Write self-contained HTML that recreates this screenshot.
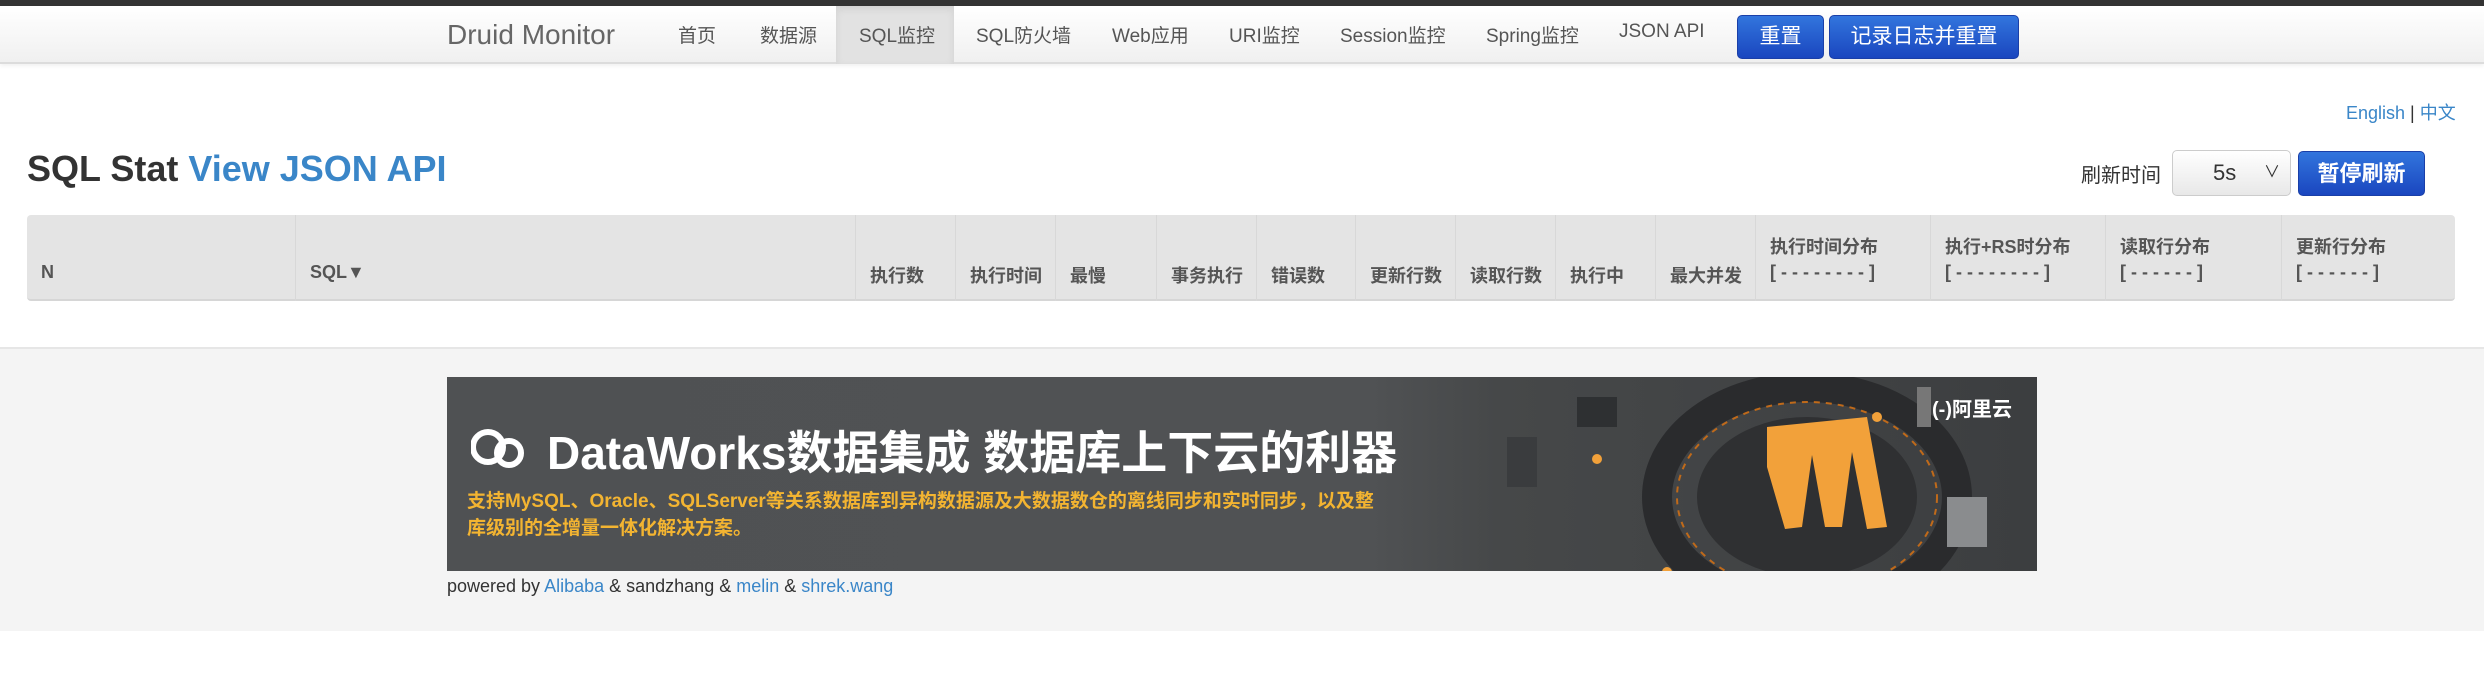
<!DOCTYPE html>
<html><head><meta charset="utf-8"><style>
*{margin:0;padding:0;box-sizing:border-box}
body{width:2484px;height:699px;background:#fff;font-family:"Liberation Sans","Noto Sans CJK SC",sans-serif;position:relative;overflow:hidden;color:#333}
.abs{position:absolute;white-space:nowrap}
.top{left:0;top:0;width:2484px;height:6px;background:#333}
.nav{left:0;top:6px;width:2484px;height:58px;background:linear-gradient(#fff,#f0f0f0);border-bottom:2px solid #dcdcdc;box-shadow:0 2px 4px rgba(0,0,0,.06)}
.brand{left:447px;top:19px;font-size:28px;color:#666}
.ni{top:21px;font-size:19px;color:#555}
.active{left:836px;top:6px;width:118px;height:58px;background:#e2e2e2;box-shadow:inset 0 3px 8px rgba(0,0,0,.08)}
.btn{background:linear-gradient(#3275dd,#1a46bf);border:1px solid #1a3fa8;border-radius:5px;color:#fff;font-size:21px;text-align:center}
.th{top:215px;height:86px;border-left:1px solid #d8d8d8;font-weight:bold;font-size:18px;color:#555}
.th span{position:absolute;left:14px}
.foot{left:0;top:347px;width:2484px;height:284px;background:#f4f4f4;border-top:2px solid #e6e6e6}
a{color:#3a86c8;text-decoration:none}
</style></head><body>
<div class="abs top"></div>
<div class="abs nav"></div>
<div class="abs active"></div>
<div class="abs brand">Druid Monitor</div>
<div class="abs ni" style="left:678px">首页</div>
<div class="abs ni" style="left:760px">数据源</div>
<div class="abs ni" style="left:859px">SQL监控</div>
<div class="abs ni" style="left:976px">SQL防火墙</div>
<div class="abs ni" style="left:1112px">Web应用</div>
<div class="abs ni" style="left:1229px">URI监控</div>
<div class="abs ni" style="left:1340px">Session监控</div>
<div class="abs ni" style="left:1486px">Spring监控</div>
<div class="abs ni" style="left:1619px">JSON API</div>
<div class="abs btn" style="left:1737px;top:15px;width:87px;height:44px;line-height:42px">重置</div>
<div class="abs btn" style="left:1829px;top:15px;width:190px;height:44px;line-height:42px">记录日志并重置</div>

<div class="abs" style="left:2346px;top:99px;font-size:18px;color:#333"><a>English</a> | <a>中文</a></div>
<div class="abs" style="left:27px;top:148px;font-size:36px;font-weight:bold;color:#333">SQL Stat <a style="color:#3a86c8">View JSON API</a></div>
<div class="abs" style="left:2081px;top:159px;font-size:20px;color:#333">刷新时间</div>
<div class="abs" style="left:2172px;top:150px;width:119px;height:46px;border:1px solid #ccc;border-radius:5px;background:linear-gradient(#fff,#e8e8e8);font-size:22px;line-height:44px;padding-left:40px">5s<span style="position:absolute;right:10px;top:0;font-size:16px">∨</span></div>
<div class="abs btn" style="left:2298px;top:151px;width:127px;height:45px;line-height:43px;font-weight:bold;font-size:22px">暂停刷新</div>

<div class="abs" style="left:27px;top:215px;width:2428px;height:86px;background:#e4e4e4;border-radius:4px;border-bottom:2px solid #d6d6d6"></div>
<div class="abs th" style="left:27px;width:268px;border-left:none"><span style="top:47px">N</span></div>
<div class="abs th" style="left:295px;width:560px"><span style="top:47px">SQL▼</span></div>
<div class="abs th" style="left:855px;width:100px"><span style="top:47px">执行数</span></div>
<div class="abs th" style="left:955px;width:100px"><span style="top:47px">执行时间</span></div>
<div class="abs th" style="left:1055px;width:101px"><span style="top:47px">最慢</span></div>
<div class="abs th" style="left:1156px;width:100px"><span style="top:47px">事务执行</span></div>
<div class="abs th" style="left:1256px;width:99px"><span style="top:47px">错误数</span></div>
<div class="abs th" style="left:1355px;width:100px"><span style="top:47px">更新行数</span></div>
<div class="abs th" style="left:1455px;width:100px"><span style="top:47px">读取行数</span></div>
<div class="abs th" style="left:1555px;width:100px"><span style="top:47px">执行中</span></div>
<div class="abs th" style="left:1655px;width:100px"><span style="top:47px">最大并发</span></div>
<div class="abs th" style="left:1755px;width:175px"><span style="top:18px">执行时间分布</span><span style="top:47px">[ - - - - - - - - ]</span></div>
<div class="abs th" style="left:1930px;width:175px"><span style="top:18px">执行+RS时分布</span><span style="top:47px">[ - - - - - - - - ]</span></div>
<div class="abs th" style="left:2105px;width:176px"><span style="top:18px">读取行分布</span><span style="top:47px">[ - - - - - - ]</span></div>
<div class="abs th" style="left:2281px;width:174px"><span style="top:18px">更新行分布</span><span style="top:47px">[ - - - - - - ]</span></div>

<div class="abs foot"></div>
<div class="abs" style="left:447px;top:377px;width:1590px;height:194px;background:linear-gradient(90deg,#4f5153 0%,#505254 58%,#464849 66%,#3c3e40 100%);overflow:hidden">
 <svg style="position:absolute;left:1000px;top:0" width="590" height="194">
  <ellipse cx="360" cy="120" rx="150" ry="110" fill="none" stroke="#2a2b2d" stroke-width="30"/>
  <ellipse cx="360" cy="120" rx="110" ry="80" fill="#2f3032"/>
  <ellipse cx="360" cy="120" rx="130" ry="95" fill="none" stroke="#c06a1a" stroke-width="2" stroke-dasharray="6 6"/>
  <path d="M320 50 L420 40 L440 150 L420 152 L405 75 L395 150 L378 150 L365 78 L355 150 L338 152 L320 90 Z" fill="#f2a13a"/>
  <rect x="60" y="60" width="30" height="50" fill="#3a3c3e"/><rect x="130" y="20" width="40" height="30" fill="#2e3032"/>
  <rect x="500" y="120" width="40" height="50" fill="#8a8c8e"/><rect x="470" y="10" width="14" height="40" fill="#777"/>
  <circle cx="150" cy="82" r="5" fill="#f2a13a"/><circle cx="220" cy="195" r="5" fill="#f2a13a"/><circle cx="430" cy="40" r="5" fill="#f2a13a"/>
 </svg>
 <div class="abs" style="right:25px;top:16px;color:#fff;font-size:20px;font-weight:bold">(-)阿里云</div>
 <svg class="abs" style="left:24px;top:48px" width="56" height="44"><circle cx="17" cy="22" r="15" fill="none" stroke="#fff" stroke-width="6"/><circle cx="38" cy="28" r="12" fill="none" stroke="#fff" stroke-width="6"/></svg>
 <div class="abs" style="left:100px;top:40px;color:#fff;font-size:46px;font-weight:bold">DataWorks数据集成 数据库上下云的利器</div>
 <div class="abs" style="left:20px;top:111px;color:#f3b431;font-size:19px;font-weight:bold;line-height:27px">支持MySQL、Oracle、SQLServer等关系数据库到异构数据源及大数据数仓的离线同步和实时同步，以及整<br>库级别的全增量一体化解决方案。</div>
</div>
<div class="abs" style="left:447px;top:576px;font-size:18px;color:#333">powered by <a>Alibaba</a> &amp; sandzhang &amp; <a>melin</a> &amp; <a>shrek.wang</a></div>
</body></html>
